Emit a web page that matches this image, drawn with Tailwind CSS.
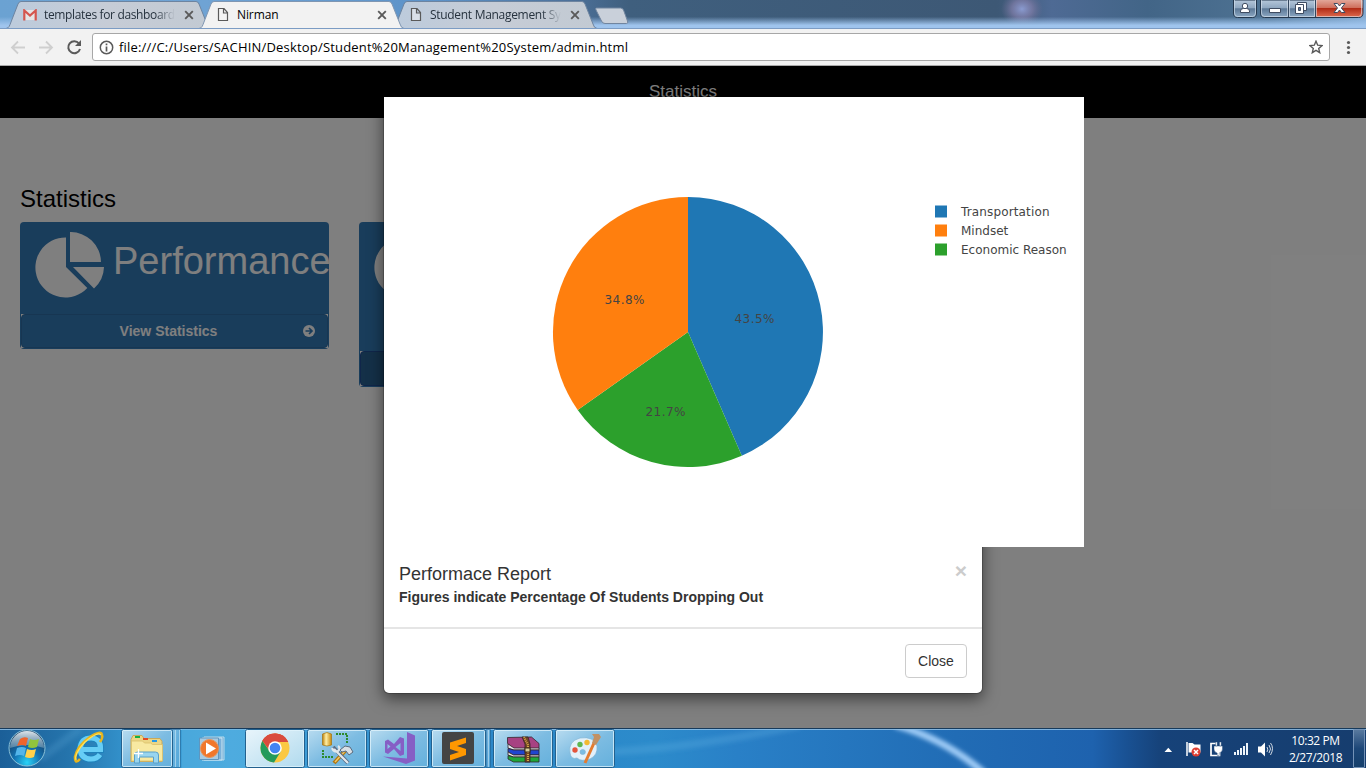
<!DOCTYPE html>
<html lang="en">
<head>
<meta charset="utf-8">
<title>Nirman</title>
<script src="https://cdn.jsdelivr.net/npm/@tailwindcss/browser@4"></script>
</head>
<body class="relative flex h-[768px] w-[1366px] flex-col overflow-hidden bg-white font-['Liberation_Sans',Arial,sans-serif]">
<svg class="absolute size-0">
  <defs>
    <linearGradient id="tabfill" x1="0" y1="0" x2="1" y2="0"><stop offset="0" stop-color="#bccbdc"/><stop offset=".5" stop-color="#c6ccd6"/><stop offset="1" stop-color="#c2cad3"/></linearGradient>
    <symbol id="page" viewBox="0 0 12 15"><path d="M1.500 1.500h5.500l3.500 4v8h-9zM6.500 1.500v4.500h4" fill="#f6f6f6" fill-opacity=".5" stroke="#5a5a5a" stroke-width="1.200"/></symbol>
    <symbol id="x" viewBox="0 0 10 10"><path d="M1.200 1.200l7.600 7.600M8.800 1.200l-7.600 7.600" stroke="#5a5a5a" stroke-width="1.900"/></symbol>
    <symbol id="piechart" viewBox="0 0 70 66"><path d="M31 5.500V35l21.300 21A30 30 0 1 1 31 5.500zM35 0a30.500 30.500 0 0 1 31 30H35zM38 35h31a30 30 0 0 1-10 21.500z" fill="#fff"/></symbol>
  </defs>
</svg>

<!-- Title bar -->
<header class="relative flex h-[29px] shrink-0 justify-between overflow-hidden border-b border-[#7c9cc4] bg-[#405d7c]">
  <svg class="absolute inset-0" width="1366" height="28">
    <defs>
      <linearGradient id="tb1" x1="0" x2="1" y1="0" y2="0"><stop offset="0" stop-color="#6ba2d2"/><stop offset=".15" stop-color="#6fa3d4"/><stop offset=".32" stop-color="#5c92c8"/><stop offset=".42" stop-color="#4c7099"/><stop offset=".46" stop-color="#3f5f7e"/><stop offset=".73" stop-color="#3d5875"/><stop offset=".77" stop-color="#4e6a94"/><stop offset=".84" stop-color="#426587"/><stop offset=".93" stop-color="#4f7393"/><stop offset="1" stop-color="#84abd2"/></linearGradient>
      <linearGradient id="tb2" x1="0" x2="0" y1="0" y2="1"><stop offset=".6" stop-color="#9fc4ed" stop-opacity="0"/><stop offset=".9" stop-color="#9fc4ed"/></linearGradient>
      <radialGradient id="tb3"><stop offset="0" stop-color="#8a9bd0"/><stop offset=".5" stop-color="#7a7aa4" stop-opacity=".8"/><stop offset="1" stop-color="#6a6a90" stop-opacity="0"/></radialGradient>
    </defs>
    <rect width="1366" height="28" fill="url(#tb1)"/><ellipse cx="1022" cy="9" rx="21" ry="18" fill="url(#tb3)"/><rect width="1366" height="28" fill="url(#tb2)"/>
  </svg>
  <div class="relative flex pl-[22px] font-['Open_Sans','Noto_Sans',sans-serif] text-[12px] tracking-[-0.35px] text-[#26323e]">
    <div class="relative flex h-[29px] w-[193px] items-center">
      <svg class="absolute top-0 -left-4" width="206" height="29"><path d="M0 28.500C3 28 3.500 26 5 22L12 4Q13 1.500 15 1.500H190Q192 1.500 193 4l8 20q1 4 4 4.500z" fill="url(#tabfill)" stroke="#6d84a0"/></svg>
      <svg class="relative ml-[1px] shrink-0" width="14" height="12" viewBox="0 0 14 12"><path d="M1 1h12v10H1z" fill="#e5e5e5"/><path d="M1.300 11.500V1.500L7 6.500l5.700-5v10" fill="none" stroke="#d5564e" stroke-width="2.200"/></svg>
      <span class="relative ml-[7px] w-[131px] overflow-hidden whitespace-nowrap mask-r-from-85%">templates for dashboard</span>
      <svg class="relative ml-[9px]" width="10" height="10"><use href="#x"/></svg>
    </div>
    <div class="relative z-10 flex h-[29px] w-[193px] items-center text-black">
      <svg class="absolute top-0 -left-4" width="206" height="29"><path d="M0 29C3 28 3.500 26 5 22L12 4Q13 1.500 15 1.500H190Q192 1.500 193 4l8 20q1 4 4 5z" fill="#f2f2f2"/><path d="M0 28.500C3 28 3.500 26 5 22L12 4Q13 1.500 15 1.500H190Q192 1.500 193 4l8 20q1 4 4 4.500" fill="none" stroke="#7f96b2"/></svg>
      <svg class="relative ml-[2px] shrink-0" width="12" height="15"><use href="#page"/></svg>
      <span class="relative ml-[8px] w-[131px] tracking-[-0.1px]">Nirman</span>
      <svg class="relative ml-[9px]" width="10" height="10"><use href="#x"/></svg>
    </div>
    <div class="relative flex h-[29px] w-[193px] items-center">
      <svg class="absolute top-0 -left-4" width="206" height="29"><path d="M0 28.500C3 28 3.500 26 5 22L12 4Q13 1.500 15 1.500H190Q192 1.500 193 4l8 20q1 4 4 4.500z" fill="url(#tabfill)" stroke="#6d84a0"/></svg>
      <svg class="relative ml-[2px] shrink-0" width="12" height="15"><use href="#page"/></svg>
      <span class="relative ml-[8px] w-[131px] overflow-hidden whitespace-nowrap mask-r-from-85% tracking-[-0.3px]">Student Management Sy</span>
      <svg class="relative ml-[9px]" width="10" height="10"><use href="#x"/></svg>
    </div>
    <svg class="mt-[7px] -ml-[6px]" width="34" height="18"><path d="M1.500 1h24q2 0 3 2l4 11q1 2.500-1 2.500H10q-2.500 0-3.500-2.500L1 3q-1-2 .5-2z" fill="#c9d0da" stroke="#71859f"/></svg>
  </div>
  <svg class="relative" width="134" height="19" viewBox="1232 0 134 19">
    <defs>
      <linearGradient id="wb" x1="0" x2="0" y1="0" y2="1"><stop offset="0" stop-color="#b5c7da"/><stop offset=".45" stop-color="#8fa7c0"/><stop offset=".5" stop-color="#5c7896"/><stop offset="1" stop-color="#8faac5"/></linearGradient>
      <linearGradient id="wr" x1="0" x2="0" y1="0" y2="1"><stop offset="0" stop-color="#e2a698"/><stop offset=".45" stop-color="#cf6f5c"/><stop offset=".5" stop-color="#b22c16"/><stop offset="1" stop-color="#dd6a4e"/></linearGradient>
    </defs>
    <path d="M1233.500 0v13q0 4.500 4 4.500h15q4 0 4-4.500V0z" fill="url(#wb)" stroke="#25384e"/><path d="M1234.500 0v13q0 3.500 3 3.500h15q3 0 3-3.500V0" fill="none" stroke="#cfdeed" stroke-opacity=".7"/>
    <path d="M1260.500 0v13q0 4.500 4 4.500h94q4.500 0 4.500-4.500V0z" fill="url(#wb)" stroke="#25384e"/>
    <path d="M1315 0v17h43.500q4 0 4-4.500V0z" fill="url(#wr)"/><path d="M1261.500 0v13q0 3.500 3 3.500h23V0M1289.500 0v16.500h25V0M1316.500 0v16.500h42q3 0 3-3.500V0" fill="none" stroke="#dfe8f2" stroke-opacity=".6"/>
    <path d="M1288.500 0v17M1315.500 0v17" stroke="#33475e"/>
    <g fill="#fff" stroke="#3f4c61"><path d="M1269.500 8.500h11v4h-11zM1297.500 2.500h9v8h-9z"/><path d="M1295.500 4.500h8v9h-8z"/><path d="M1298.500 7.500h2v3h-2z" fill="#60789a"/><circle cx="1245" cy="6" r="2.700"/><path d="M1240.500 12.500v-1.500q0-2.500 3-2.500h3q3 0 3 2.500v1.500z"/><path d="M1334 3.500h3.500l2 2.500 2-2.500h3.500l-3.600 4.500 3.600 4.500h-3.500l-2-2.500-2 2.500h-3.500l3.500-4.500z"/></g>
  </svg>
</header>

<!-- Toolbar -->
<div class="flex h-[37px] shrink-0 items-center border-b border-[#a9a9a9] bg-[#f2f2f2]">
  <svg class="ml-[10px]" width="76" height="20" viewBox="0 0 76 20" fill="none">
    <path d="M15 10.500H2M8 4.500l-6 6 6 6M29 10.500h13M36 4.500l6 6-6 6" stroke="#cfcfcf" stroke-width="1.800"/>
    <path d="M69 6.500A6 6 0 1 0 70 12" stroke="#5a5a5a" stroke-width="2"/><path d="M71 3v6h-6z" fill="#5a5a5a"/>
  </svg>
  <div class="ml-[6px] flex h-[28px] w-[1238px] items-center rounded-[3px] border border-[#a7a7a7] bg-white">
    <svg class="ml-[6px]" width="15" height="15" viewBox="0 0 15 15"><circle cx="7.500" cy="7.500" r="6.200" fill="none" stroke="#5a5a5a" stroke-width="1.500"/><path d="M7.500 6.500v5M7.500 3.500v1.800" stroke="#5a5a5a" stroke-width="1.700"/></svg>
    <span class="ml-[5px] flex-1 pt-px font-['Open_Sans','Noto_Sans',sans-serif] text-[13px] tracking-[0.19px] whitespace-nowrap text-black">file:///C:/Users/SACHIN/Desktop/Student%20Management%20System/admin.html</span>
    <svg class="mr-[6px]" width="14" height="14" viewBox="0 0 14 14"><path d="M7 1.200l1.700 4 4.300.4-3.300 2.800 1 4.300L7 10.400l-3.700 2.300 1-4.300L1 5.600l4.300-.4z" fill="none" stroke="#5a5a5a" stroke-width="1.400"/></svg>
  </div>
  <svg class="ml-[15px]" width="6" height="16"><g fill="#5a5a5a"><circle cx="3.500" cy="3.500" r="1.600"/><circle cx="3.500" cy="8.500" r="1.600"/><circle cx="3.500" cy="13.500" r="1.600"/></g></svg>
</div>

<!-- Web page -->
<main class="relative h-[662px] shrink-0 overflow-hidden bg-white">
  <nav class="flex h-[52px] justify-center bg-black pt-[15px] text-[17px] leading-[22px] text-white">Statistics</nav>
  <h1 class="mt-[66px] ml-5 text-[24px] leading-[30px] text-black">Statistics</h1>
  <div class="mt-[8px] flex items-start gap-[30px] pl-5">
    <section class="h-[127px] w-[309px] rounded-[4px] bg-[#337ab7] px-px">
      <div class="flex h-[92px] pt-[10px] pl-[14px] text-white">
        <svg class="shrink-0" width="70" height="66"><use href="#piechart"/></svg>
        <span class="ml-[8px] pt-[8px] text-[38px] leading-[42px]">Performance</span>
      </div>
      <div class="bg-white">
        <div class="flex h-[34px] items-center rounded-[4px] border border-[#2e6da4] bg-[#337ab7] pr-[12px] text-[14px] font-bold text-white">
          <span class="flex-1 pl-[12px] text-center">View Statistics</span>
          <svg width="12" height="12" viewBox="0 0 12 12"><circle cx="6" cy="6" r="6" fill="#fff"/><path d="M2.500 6h6M6 3l3 3-3 3" fill="none" stroke="#337ab7" stroke-width="1.700"/></svg>
        </div>
      </div>
    </section>
    <section class="h-[165px] w-[309px] overflow-hidden rounded-[4px] bg-[#337ab7] px-px">
      <div class="h-[129px] pt-[10px] pl-[14px]"><svg width="70" height="66"><use href="#piechart"/></svg></div>
      <div class="bg-white"><div class="h-[35px] rounded-[4px] border border-[#204d94] bg-[#286090]"></div></div>
    </section>
  </div>
  <div class="absolute inset-0 bg-black/50"></div>

  <!-- Report dialog -->
  <div class="absolute top-[30px] left-[383px] w-[600px] rounded-[6px] border border-black/20 bg-white bg-clip-padding shadow-[0_5px_15px_rgba(0,0,0,0.5)]">
    <svg class="relative block overflow-visible font-['DejaVu_Sans',Verdana,sans-serif] text-[12px]" width="700" height="450">
      <rect width="700" height="450" fill="#fff"/>
      <path d="M304 235V100A135 135 0 0 1 357.800 358.800z" fill="#1f77b4"/>
      <path d="M304 235L357.800 358.800A135 135 0 0 1 193.700 312.900z" fill="#2ca02c"/>
      <path d="M304 235L193.700 312.900A135 135 0 0 1 304 100z" fill="#ff7f0e"/>
      <g fill="#444" text-anchor="middle"><text x="370.500" y="226" textLength="40">43.5%</text><text x="240.500" y="207" textLength="40">34.8%</text><text x="281.500" y="319" textLength="40">21.7%</text></g>
      <path d="M551 108.500h12v12h-12z" fill="#1f77b4"/><path d="M551 127.500h12v12h-12z" fill="#ff7f0e"/><path d="M551 146.500h12v12h-12z" fill="#2ca02c"/>
      <g fill="#444"><text x="577" y="119" textLength="88.500">Transportation</text><text x="577" y="138">Mindset</text><text x="577" y="157">Economic Reason</text></g>
    </svg>
    <div class="flex h-[82px] justify-between border-b-2 border-[#e5e5e5] px-[15px] pt-[15px] text-[#333]">
      <div><h4 class="text-[18px] leading-[24px]">Performace Report</h4><p class="text-[14px] leading-[22px] font-bold">Figures indicate Percentage Of Students Dropping Out</p></div>
      <button class="-mt-[2px] h-[21px] text-[21px] leading-[21px] font-bold text-[#ccc]">×</button>
    </div>
    <div class="flex h-[64px] justify-end p-[15px]"><button class="h-[34px] w-[62px] rounded-[4px] border border-[#ccc] bg-white text-[14px] text-[#333]">Close</button></div>
  </div>
</main>

<!-- Taskbar -->
<footer class="relative flex h-10 shrink-0 overflow-hidden border-t border-[#173a5b] bg-[#2880c5]">
  <svg class="absolute inset-0" width="1366" height="39">
    <defs><linearGradient id="tk" x1="0" x2="1" y1="0" y2="0"><stop offset="0" stop-color="#1b5f98"/><stop offset=".05" stop-color="#2574ac"/><stop offset=".1" stop-color="#3698d2"/><stop offset=".17" stop-color="#45a5dc"/><stop offset=".35" stop-color="#2b87c8"/><stop offset=".48" stop-color="#2c8bcb"/><stop offset=".54" stop-color="#2980c7"/><stop offset=".7" stop-color="#216cb5"/><stop offset=".8" stop-color="#1e62ae"/><stop offset=".825" stop-color="#195193"/><stop offset=".85" stop-color="#164279"/><stop offset="1" stop-color="#163d6e"/></linearGradient>
    <filter id="bl" x="-20%" y="-50%" width="140%" height="200%"><feGaussianBlur stdDeviation="2"/></filter></defs>
    <rect width="1366" height="39" fill="url(#tk)"/>
    <path d="M600 23Q690 20 800 -4" stroke="#5fb0e0" stroke-opacity=".3" stroke-width="8" fill="none" filter="url(#bl)"/>
    <path d="M895-4Q945 10 984 44" stroke="#9ecbf6" stroke-width="7" fill="none" filter="url(#bl)"/>
    <path d="M40 30L80 0" stroke="#6ab6e0" stroke-opacity=".2" stroke-width="8" filter="url(#bl)"/>
    <path d="M0 .5h1366" stroke="#8fc0e6" stroke-opacity=".85"/>
  </svg>
  <svg class="relative shrink-0" width="616" height="39" viewBox="0 729 616 39">
    <defs>
      <linearGradient id="btn" x1="0" x2="1" y1="0" y2="1"><stop offset="0" stop-color="#b9dcf0"/><stop offset=".5" stop-color="#7dbce2"/><stop offset="1" stop-color="#64b0dc"/></linearGradient>
      <linearGradient id="act" x1="0" x2="1" y1="0" y2="1"><stop offset="0" stop-color="#e9f5fb"/><stop offset="1" stop-color="#b0daee"/></linearGradient>
      <radialGradient id="orb" cx=".5" cy=".9" r=".8"><stop offset="0" stop-color="#29d3f7"/><stop offset=".45" stop-color="#1374b4"/><stop offset="1" stop-color="#173a60"/></radialGradient>
      <linearGradient id="gloss" x1="0" x2="0" y1="0" y2="1"><stop offset="0" stop-color="#f4f9fb" stop-opacity=".9"/><stop offset="1" stop-color="#99b9ca" stop-opacity=".45"/></linearGradient>
      <linearGradient id="gold" x1="0" x2="1" y1="0" y2="0"><stop offset="0" stop-color="#bd7e08"/><stop offset=".4" stop-color="#fff0a6"/><stop offset="1" stop-color="#c78609"/></linearGradient>
    </defs>
    <circle cx="27" cy="748" r="18" fill="url(#orb)" stroke="#8bc3da"/><path d="M10 748A17 17 0 0 1 44 748Q27 742 10 748z" fill="url(#gloss)"/>
    <path d="M20 739q4-3 8-1l-2 8q-4-2-9 0z" fill="#ef642b"/><path d="M30 739q4 2 9 0l-2 8q-5 2-9 0z" fill="#91c53c"/><path d="M17 748q5-2 9 0l-2 8q-4-2-9 0z" fill="#54b5ea"/><path d="M27 749q5 2 9 0l-2 8q-4 2-9 0z" fill="#ffd14c"/>
    <path d="M81 749.500H100.500Q101 738 91 738Q81 738 80 749Q81 759 91 759Q97 759 100 754.500" fill="none" stroke="#1e82bc" stroke-width="7"/><path d="M81 749.500H100.500Q101 738 91 738Q81 738 80 749Q81 759 91 759Q97 759 100 754.500" fill="none" stroke="#66cdf6" stroke-width="5.200"/>
    <path d="M80 759Q75 765 75 757Q77 746 90 737Q101 730 102 735Q103 738 100 742" fill="none" stroke="#e7b51e" stroke-width="2.600"/><path d="M76 760Q74 754 85 742Q98 731 101 735" fill="none" stroke="#ffe15a" stroke-width="1.200"/>
    <path d="M182 729h63v39h-63z" fill="#58b3e3" opacity=".45"/>
    <g fill="url(#btn)" stroke="#22618f"><path d="M172 729.500h8.500v38H172z" opacity=".55"/><rect x="121.500" y="729.500" width="51" height="38" rx="2"/><rect x="307.500" y="729.500" width="59" height="38" rx="2"/><rect x="369.500" y="729.500" width="59" height="38" rx="2"/><path d="M486 729.500h4.500v38H486z" opacity=".6"/><rect x="431.500" y="729.500" width="54" height="38" rx="2"/><rect x="493.500" y="729.500" width="59" height="38" rx="2"/><rect x="555.500" y="729.500" width="59" height="38" rx="2"/></g>
    <rect x="245.500" y="729.500" width="59" height="38" rx="2" fill="url(#act)" stroke="#22618f"/>
    <g fill="none" stroke="#e2f4fc" stroke-opacity=".75"><rect x="122.500" y="730.500" width="49" height="36" rx="1"/><path d="M175.500 730v37M179.500 730v37M488.500 730v37" stroke-opacity=".5"/><rect x="246.500" y="730.500" width="57" height="36" rx="1"/><rect x="308.500" y="730.500" width="57" height="36" rx="1"/><rect x="370.500" y="730.500" width="57" height="36" rx="1"/><rect x="432.500" y="730.500" width="52" height="36" rx="1"/><rect x="494.500" y="730.500" width="57" height="36" rx="1"/><rect x="556.500" y="730.500" width="57" height="36" rx="1"/></g>
    <!-- Explorer -->
    <path d="M133 735.500h9l2 3h16l2 3v20h-31v-22z" fill="#ecd685" stroke="#c9a95a"/><path d="M135 736h5v2h-5z" fill="#14b044"/><path d="M143 738h5v2h-5z" fill="#e44922"/><path d="M152 740h5v2h-5z" fill="#2698e6"/><path d="M131.500 741h11l2 2h6l2 1.500h10V761h-31z" fill="#f8e9a1" stroke="#d9bf6b" stroke-width=".8"/><path d="M134.500 763v-8q0-3 3-3h18q3 0 3 3v8h-5v-6h-14v6z" fill="#99d5ef" stroke="#5ba0c8"/><path d="M138.500 749v9M134 753.500h9" stroke="#fff" stroke-width="1.300"/>
    <!-- Media player -->
    <path d="M204 737h20v23h-20z" fill="#6aa6d3" stroke="#b7dced"/><path d="M202 738h20v22h-20z" fill="#7bb1da" stroke="#cfe8f4"/><path d="M199.500 738h19v21.500h-19z" fill="#a7cbe3" stroke="#6096be"/><circle cx="209.500" cy="748.500" r="9" fill="#f1772b" stroke="#e5945b"/><path d="M206 742.500l10 6-10 6z" fill="#fff"/>
    <!-- Chrome -->
    <circle cx="275" cy="748" r="14.500" fill="#fbc843"/><path d="M275 748L262.400 740.800A14.500 14.500 0 0 1 288.200 742H275z" fill="#d94b3d"/><path d="M262.400 740.800A14.500 14.500 0 0 0 274 762.500L281 751 269.500 751z" fill="#249b5c"/><path d="M262.400 740.800L269.800 751 275 742h13.200A14.500 14.500 0 0 0 262.400 740.800z" fill="#d94b3d"/><circle cx="275" cy="748" r="6.800" fill="#fff"/><circle cx="275" cy="748" r="5.300" fill="#4284f3"/>
    <!-- Database tools -->
    <path d="M322.500 734q4.500-3 9 0v11q-4.500 2-9 0z" fill="url(#gold)" stroke="#a27514" stroke-width=".7"/><path d="M336 734h11v10M323 750v7h10" fill="none" stroke="#2e8a2d" stroke-width="2" stroke-dasharray="2 1"/><path d="M334 763l11-12" stroke="#b1760f" stroke-width="4"/><path d="M335 762l10-11" stroke="#f0c867" stroke-width="1.500"/><path d="M333 747l15 16" stroke="#5c6f88" stroke-width="4"/><path d="M332 748q2 5 6 3 3-3 0-5M334 749l14 14" fill="none" stroke="#e2e8ee" stroke-width="2.200"/><path d="M340 750l5-4 5 1 3 5-4 3-3-4-4 1z" fill="#d8dfe5" stroke="#5a6b7e"/>
    <!-- Visual Studio -->
    <path fill-rule="evenodd" d="M407 732l8 3.500v25l-9 3.500-23-7.500 24 2zM385 741l3-1.500 6 4.500 6-7 4 1.500v16l-4 1.500-6-7-6 5-3-1.500zm2.500 3v5l3-2.500zm13-1l-5 4 5 4z" fill="#865fc5"/>
    <!-- Sublime Text -->
    <rect x="442" y="732" width="32" height="32" rx="2" fill="#444"/><path d="M450 742.500l16-5v5.500l-9 3 9 3v6l-16 5.500V755l9-3-9-3z" fill="#ff9800"/>
    <!-- WinRAR -->
    <g stroke="#332629" stroke-width=".8"><path d="M507.500 737.500l24-.5 7.500 6.500v5h-25l-6.500-5z" fill="#a74282"/><path d="M508 744l6 4h25v2h-25l-6-2z" fill="#e8e8ee"/><path d="M508 748.500l5.500 1.500h25.500v5h-25.500l-5.500-3z" fill="#2045cf"/><path d="M508 752l5.500 3h25.500v2h-25.500l-5.500-2z" fill="#e8e8ee"/><path d="M508 755.500l5.500 1.500h25.500v5h-25.500l-5.500-3z" fill="#1fa63a"/><path d="M522 737h6l2 7v18h-5v-18z" fill="#754724"/></g><path d="M524 737l4 8v16" fill="none" stroke="#d2a747" stroke-dasharray="1 1" stroke-width="2"/><rect x="525" y="748" width="5" height="4" fill="#d8d09a" stroke="#3c2b19"/>
    <!-- Paint -->
    <path fill-rule="evenodd" d="M570 753Q568 741 580 738Q594 736 597 746Q598 755 590 759Q581 762 577 758Q571 760 570 753zM580 752a2.700 2.500 0 1 0 5.400 0a2.700 2.500 0 1 0-5.400 0z" fill="#e2f0fa" stroke="#83b4d2" stroke-width=".7"/><circle cx="575" cy="750" r="2.700" fill="#e4543c"/><circle cx="580" cy="744.500" r="2.700" fill="#5db651"/><circle cx="587" cy="742.500" r="2.700" fill="#f2b931"/><path d="M585 763l9-20" stroke="#e47b2f" stroke-width="3"/><path d="M592 743l2-6-2-3 7 0 2 3-5 8z" fill="#c29164"/>
  </svg>
  <div class="flex-1"></div>
  <svg class="relative shrink-0" width="110" height="39" viewBox="1164 729 110 39">
    <path d="M1164.500 752l3.800-4.200 3.800 4.200z" fill="#fff"/>
    <path d="M1187 742v14" stroke="#fff" stroke-width="1.500"/><path d="M1188.500 743h4l2 1.500h6v8h-12z" fill="#fff"/><circle cx="1196" cy="752" r="4.500" fill="#df3e32"/><path d="M1194 750l4 4M1198 750l-4 4" stroke="#fff" stroke-width="1.500"/>
    <path d="M1217 743.500h-6v12h8.500v-3" fill="none" stroke="#fff" stroke-width="1.700"/><path d="M1214 746h8.500v3q0 3-3.300 4v2.500h-2v-2.500q-3.200-1-3.200-4zM1215.500 742h1.700v4h-1.700zM1219.500 742h1.700v4h-1.700z" fill="#fff" stroke="#1a4271" stroke-width=".4"/>
    <path d="M1234 752h2v3h-2zM1237 750h2v5h-2zM1240 748h2v7h-2zM1243 746h2v9h-2zM1246 743h2v12h-2z" fill="#eef5fb"/>
    <path d="M1258 746.500h3l4-4v14l-4-4h-3z" fill="#fff"/><path d="M1267 747q1.500 2 0 5M1269 745q3 4 0 8M1270.500 743q4 5 0 12" fill="none" stroke="#fff" stroke-opacity=".8"/>
  </svg>
  <div class="relative mr-[10px] ml-[14px] w-[55px] pt-[3px] text-center font-['Open_Sans','Noto_Sans',sans-serif] text-[12px] leading-[17px] tracking-[-0.4px] whitespace-nowrap text-white"><div>10:32 PM</div><div>2/27/2018</div></div>
  <div class="relative mr-[1px] w-[12px] rounded-[1px] border border-[#7492b6] bg-linear-to-b from-[#58799e] via-[#1d4778] to-[#153f6b]"></div>
</footer>
</body>
</html>
